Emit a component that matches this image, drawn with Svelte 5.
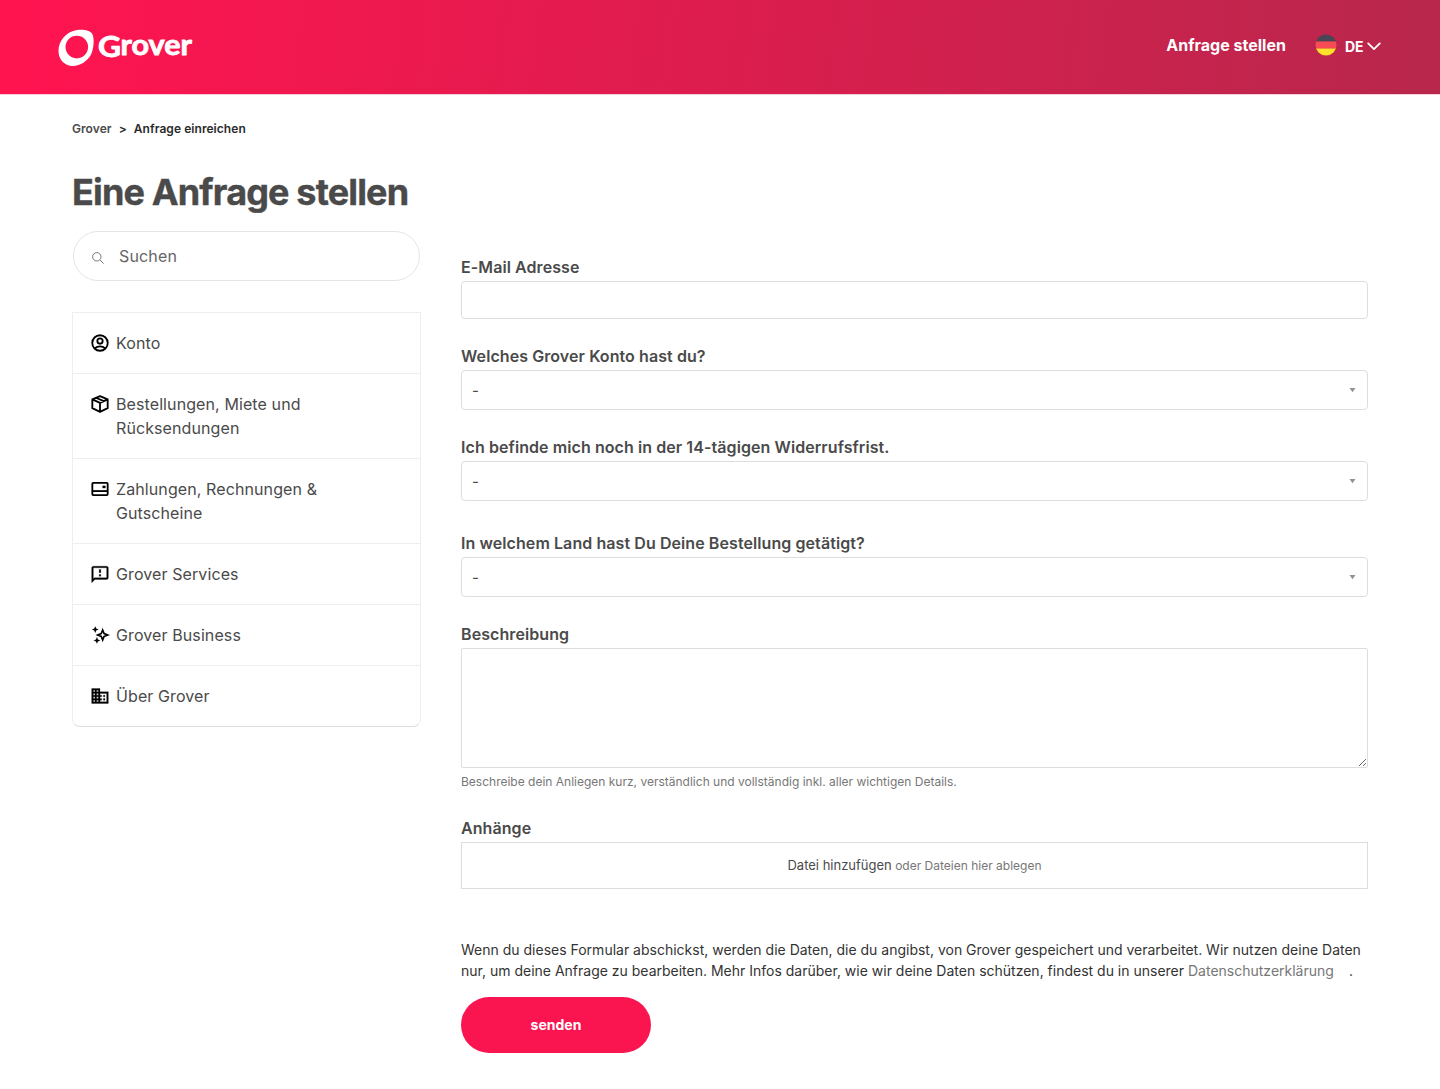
<script>
  const topics = [
    { icon: 'account', label: 'Konto' },
    { icon: 'box', label: 'Bestellungen, Miete und Rücksendungen' },
    { icon: 'card', label: 'Zahlungen, Rechnungen & Gutscheine' },
    { icon: 'feedback', label: 'Grover Services' },
    { icon: 'sparkle', label: 'Grover Business' },
    { icon: 'building', label: 'Über Grover' }
  ];
  const selects = [
    { id: 'account', label: 'Welches Grover Konto hast du?' },
    { id: 'withdrawal', label: 'Ich befinde mich noch in der 14-tägigen Widerrufsfrist.' },
    { id: 'country', label: 'In welchem Land hast Du Deine Bestellung getätigt?' }
  ];
</script>

<header>
  <svg class="logo" width="140" height="44" viewBox="0 0 140 44" aria-label="Grover">
    <path fill="#fff" fill-rule="evenodd" d="M20 5.200C26 4.300 33.500 4.600 36.300 9C38.500 13 38 23 35.300 29C32 36 24 41 17 41C8 41 2.500 34 2.500 26C2.500 16 10 6.800 20 5.200ZM20.800 10.800a11.300 11.300 0 1 0 0 22.600a11.300 11.300 0 1 0 0-22.600Z" />
    <text x="42" y="32" textLength="23" lengthAdjust="spacingAndGlyphs">G</text>
    <text x="64.500" y="30.400" textLength="71.500" lengthAdjust="spacingAndGlyphs">rover</text>
  </svg>
  <nav>
    <a class="request" href="#request">Anfrage stellen</a>
    <button class="lang" type="button">
      <svg class="flag" width="22" height="22" viewBox="0 0 22 22">
        <clipPath id="flag"><circle cx="11" cy="11" r="10.500" /></clipPath>
        <g clip-path="url(#flag)">
          <rect width="22" height="7.500" fill="#464655" />
          <rect y="7.500" width="22" height="7" fill="#f74b55" />
          <rect y="14.500" width="22" height="7.500" fill="#ffe12d" />
        </g>
      </svg>
      <span>DE</span>
      <svg class="chev" width="14" height="9" viewBox="0 0 14 9"><path d="M1.200 1.400 7 7.100l5.800-5.700" fill="none" stroke="#fff" stroke-width="1.800" stroke-linecap="round" stroke-linejoin="round" /></svg>
    </button>
  </nav>
</header>

<main>
  <ol class="crumbs"><li>Grover</li><li class="sep">&gt;</li><li class="here">Anfrage einreichen</li></ol>
  <h1>Eine Anfrage stellen</h1>
  <div class="columns">
    <aside>
      <label class="search">
        <svg width="12" height="12" viewBox="0 0 12 12" fill="none" stroke="currentColor"><circle cx="4.800" cy="4.800" r="4.200" /><path d="m8 8 3.600 3.600" /></svg>
        <input type="text" placeholder="Suchen" />
      </label>
      <ul class="topics">
        {#each topics as t}
          <li>
            <svg width="20" height="20" viewBox="0 0 24 24">
              {#if t.icon === 'account'}
                <g fill="none" stroke="#000" stroke-width="2.200"><circle cx="12" cy="12" r="9.300" /><circle cx="12" cy="9.700" r="3.200" /><path d="M5.600 18.400c3.700-3.200 9.100-3.200 12.800 0" /></g>
              {:else if t.icon === 'box'}
                <g fill="none" stroke="#000" stroke-width="2.200" stroke-linejoin="round"><path d="M12 2.600 21.200 6.500v10.500L12 21.500l-9.200-4.500V6.500ZM2.800 6.500 12 10.600l9.200-4.100M12 10.600v10.900M7.200 4.500l9.200 4" /></g>
              {:else if t.icon === 'card'}
                <rect x="2.800" y="4.600" width="18.400" height="14.800" rx="1" fill="none" stroke="#000" stroke-width="2.200" /><path d="M2.800 14.500h18.400" stroke="#000" stroke-width="2.200" /><path d="M15 8h3.600v3H15z" />
              {:else if t.icon === 'feedback'}
                <path d="M20 2H4c-1.100 0-1.990.900-1.990 2L2 22l4-4h14c1.100 0 2-.900 2-2V4c0-1.100-.900-2-2-2zm0 14H5.170l-.590.590-.580.580V4h16v12zm-9-4h2v2h-2zm0-6h2v4h-2z" transform="translate(0 .600)" stroke="#000" stroke-width=".300" />
              {:else if t.icon === 'sparkle'}
                <path d="m15.200 6 1.700 4.300L21.200 12l-4.300 1.700-1.700 4.300-1.700-4.300L9.200 12l4.300-1.700Z" fill="none" stroke="#000" stroke-width="2" /><path d="m6.300 1.500 1.200 2.800 2.800 1.200-2.800 1.200-1.200 2.800-1.200-2.800-2.800-1.200 2.800-1.200ZM8.300 14.500l1.200 2.800 2.800 1.200-2.800 1.200-1.200 2.800-1.200-2.800-2.800-1.200 2.800-1.200Z" />
              {:else}
                <path d="M12 7V3H2v18h20V7H12zM6 19H4v-2h2v2zm0-4H4v-2h2v2zm0-4H4V9h2v2zm0-4H4V5h2v2zm4 12H8v-2h2v2zm0-4H8v-2h2v2zm0-4H8V9h2v2zm0-4H8V5h2v2zm10 12h-8v-2h2v-2h-2v-2h2v-2h-2V9h8v10zm-2-8h-2v2h2v-2zm0 4h-2v2h2v-2z" stroke="#000" stroke-width=".300" />
              {/if}
            </svg>
            <span>{t.label}</span>
          </li>
        {/each}
      </ul>
    </aside>

    <form>
      <div class="field email">
        <label for="email">E-Mail Adresse</label>
        <input id="email" type="text" />
      </div>
      {#each selects as s}
        <div class="field {s.id}">
          <span class="label">{s.label}</span>
          <div class="select" role="combobox" tabindex="0" aria-expanded="false" aria-controls={s.id}>
            <span>-</span>
            <svg width="7" height="5" viewBox="0 0 7 5"><path d="M.500 0h6L3.500 4.300Z" fill="#909295" /></svg>
          </div>
        </div>
      {/each}
      <div class="field description">
        <label for="desc">Beschreibung</label>
        <textarea id="desc"></textarea>
        <p class="hint">Beschreibe dein Anliegen kurz, verständlich und vollständig inkl. aller wichtigen Details.</p>
      </div>
      <div class="field">
        <span class="label">Anhänge</span>
        <div class="drop"><b>Datei hinzufügen</b>&nbsp;<span>oder Dateien hier ablegen</span></div>
      </div>
      <p class="legal">
        <span>Wenn du dieses Formular abschickst, werden die Daten, die du angibst, von Grover gespeichert und verarbeitet. Wir nutzen deine Daten</span>
        <span>nur, um deine Anfrage zu bearbeiten. Mehr Infos darüber, wie wir deine Daten schützen, findest du in unserer <a href="#privacy">Datenschutzerklärung</a>.</span>
      </p>
      <button class="send" type="button">senden</button>
    </form>
  </div>
</main>

<style>
  :global(body) { background: #fff; }
  :global(*) { box-sizing: border-box; }
  header, main { font-family: Inter, sans-serif; color: #4a4a4a; }
  header {
    height: 95px;
    padding: 0 59.500px 0 56px;
    display: flex;
    align-items: center;
    justify-content: space-between;
    background: linear-gradient(97deg, #ff1450 2%, #b8274c);
    background-clip: padding-box;
    border-bottom: 1px solid #f6cdd8;
  }
  .logo { margin-top: -1px; }
  .logo text { font: 700 28px Lato, sans-serif; fill: #fff; stroke: #fff; stroke-width: 0.800px; }
  nav { display: flex; align-items: center; color: #fff; margin-top: -4px; }
  .request { color: #fff; text-decoration: none; font-weight: 700; font-size: 16px; letter-spacing: 0; }
  .lang { display: flex; align-items: center; margin-left: 29px; padding: 0; border: 0; background: none; color: #fff; font: 700 14px Inter, sans-serif; }
  .lang span { margin: 3px 3px 0 8px; }
  .flag { margin-top: 0; }
  .chev { margin-top: 2px; }
  main { padding: 26px 72px 0; }
  .crumbs { display: flex; gap: 7px; margin: 0; padding: 0; list-style: none; font-size: 12px; font-weight: 600; line-height: 15px; letter-spacing: 0.060px; }
  .here, .sep { color: #2b2b2b; }
  h1 { margin: 34px 0 0; font-size: 36px; line-height: 44px; font-weight: 700; letter-spacing: -0.850px; -webkit-text-stroke: 0.400px #4a4a4a; }
  .columns { display: flex; gap: 40px; margin-top: 17px; align-items: flex-start; }
  aside { width: 349px; flex: none; }
  .search { display: flex; align-items: center; height: 50px; margin: 0 1px; padding: 0 18px; border: 1px solid #e5e5e5; border-radius: 25px; color: #777; }
  .search svg { margin: 3px 0.500px 0 -0.500px; flex: none; }
  .search input { border: 0; outline: 0; background: none; padding: 0; margin-left: 15px; font: 400 16px Inter, sans-serif; letter-spacing: 0.150px; min-width: 0; }
  .search input::placeholder { color: #666; opacity: 1; }
  .topics { list-style: none; margin: 31px 0 0; padding: 0; border: 1px solid #eee; border-bottom-color: #ddd; border-radius: 0 0 8px 8px; }
  .topics li { display: flex; align-items: flex-start; padding: 18px 60px 18px 17px; font-size: 16px; line-height: 24px; letter-spacing: 0.100px; }
  .topics li + li { border-top: 1px solid #eee; }
  .topics svg { flex: none; margin: 2px 6px 0 0; }
  form { width: 907px; padding-top: 24px; }
  .field { margin-bottom: 25px; }
  .withdrawal { margin-bottom: 30px; }
  .field label, .label { display: block; font-size: 16px; line-height: 24px; font-weight: 600; margin-bottom: 2px; letter-spacing: 0.080px; }
  .field input { display: block; width: 100%; height: 38px; border: 1px solid #ddd; border-radius: 4px; }
  .select { display: flex; justify-content: space-between; align-items: center; height: 40px; padding: 0 11px 0 10px; border: 1px solid #ddd; border-radius: 4px; font-size: 15px; }
  textarea { display: block; width: 100%; height: 120px; border: 1px solid #ddd; border-radius: 2px; outline: 0; resize: vertical; }
  .hint { margin: 5px 0 0; font-size: 12px; line-height: 18px; color: #777; }
  .drop { display: flex; align-items: baseline; justify-content: center; height: 47px; border: 1px solid #ddd; font-size: 12px; line-height: 44px; color: #777; }
  .drop b { font-weight: 400; font-size: 13px; color: #4a4a4a; }
  .legal { margin: 50px 0 16px; font-size: 14px; line-height: 21px; color: #333; }
  .legal span { display: block; white-space: nowrap; }
  .legal a { color: #777; text-decoration: none; margin-right: 15px; }
  .send { display: block; width: 190px; height: 56px; padding: 0 0 2px; border: 0; border-radius: 28px; background: #fa1450; color: #fff; font: 700 14px Inter, sans-serif; }
</style>
